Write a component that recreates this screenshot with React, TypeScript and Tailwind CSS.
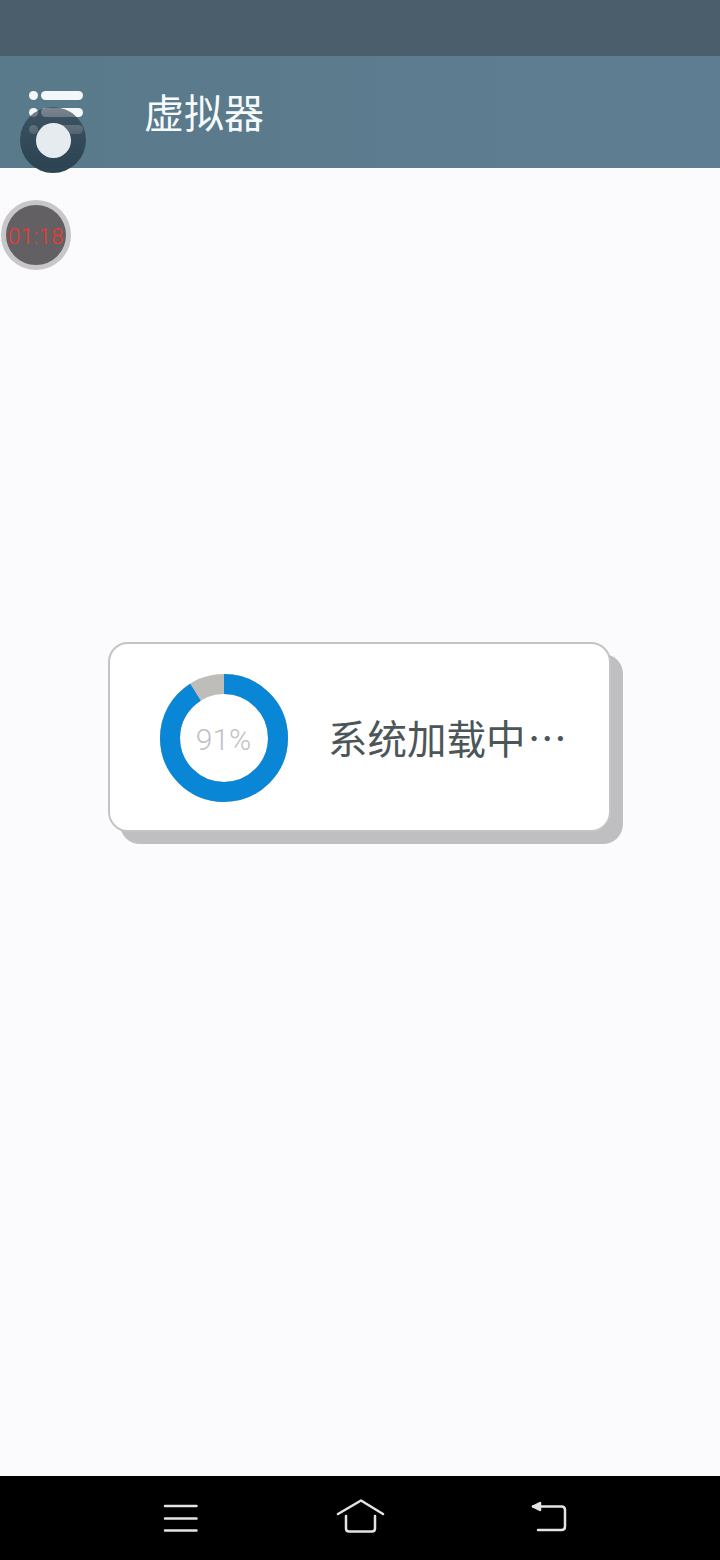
const cjk = "font-['Noto_Sans_CJK_SC','Noto_Sans',sans-serif]";

function Donut() {
  // 91% ring, the grey part is what's left
  const r = 54;
  const c = 2 * Math.PI * r;
  return (
    <svg width="128" height="128" viewBox="0 0 128 128" className="shrink-0">
      <circle cx="64" cy="64" r={r} fill="none" stroke="#bfbdb9" strokeWidth="20" />
      <circle
        cx="64"
        cy="64"
        r={r}
        fill="none"
        stroke="#0a86d6"
        strokeWidth="20"
        strokeDasharray={`${c * 0.91} ${c}`}
        transform="rotate(-90 64 64)"
      />
    </svg>
  );
}

export default function App() {
  return (
    <div className={`relative flex h-[1560px] w-[720px] flex-col overflow-hidden bg-[#fbfafc] ${cjk}`}>
      {/* status bar */}
      <div className="h-14 shrink-0 bg-[#4a5f6b]" />

      {/* header */}
      <div className="flex h-[112px] shrink-0 items-center bg-gradient-to-r from-[#597a8a] to-[#5f7d92] pl-[29px]">
        <div className="flex w-[54px] flex-col gap-[8px]">
          {[0, 1, 2].map((i) => (
            <div key={i} className="flex gap-[3px]">
              <div className="h-[9px] w-[9px] rounded-full bg-[#f4f8fa]" />
              <div className="h-[9px] flex-1 rounded-full bg-[#f4f8fa]" />
            </div>
          ))}
        </div>
        <div className="mb-[2px] ml-[61px] text-[40px] leading-none text-[#f6fafb]">虚拟器</div>
      </div>

      {/* loading card */}
      <div className="flex-1 pl-[108px] pt-[474px]">
        <div className="flex h-[190px] w-[503px] items-center rounded-[20px] border-[2.500px] border-[#c4c4c6] bg-white pl-[49.500px] shadow-[12px_12px_0_#bfbfc1]">
          <div className="relative mt-[2px] h-[128px] w-[128px] shrink-0">
            <Donut />
            <div className="absolute inset-0 flex items-center justify-center pt-[3px] font-['Roboto',sans-serif] text-[30px] font-light text-[#c0c2c4]">
              91%
            </div>
          </div>
          <div className="ml-[40.500px] whitespace-nowrap text-[39.500px] leading-none text-[#4c5658]">
            系统加载中
            <span className="ml-[2px]">…</span>
          </div>
        </div>
      </div>

      {/* nav bar */}
      <div className="flex h-[84px] shrink-0 items-center bg-black">
        <svg width="720" height="84" viewBox="0 0 720 84" fill="none" stroke="#e4e4e4" strokeWidth="2.5" strokeLinecap="round" strokeLinejoin="round">
          <path d="M165 30H196.500M165 42.500H196.500M165 54.500H196.500" />
          <path d="M338 38L361 24.500L383 38M346 40V52.500Q346 55.500 349 55.500H372Q375 55.500 375 52.500V40" />
          <path d="M533 30.500H561.500Q565 30.500 565 34V50.500Q565 54 561.500 54H538" />
          <path d="M533 30.500L540 27V34Z" fill="#e4e4e4" />
        </svg>
      </div>

      {/* floating assist ball, see-through towards the top */}
      <div className="absolute left-[20px] top-[107px] flex h-[66px] w-[66px] items-center justify-center rounded-full bg-gradient-to-b from-[#2c3a4c]/60 via-[#2c4250]/85 to-[#2c4250]">
        <div className="h-[35px] w-[35px] rounded-full bg-[#e6ebf0]" />
      </div>

      {/* floating timer */}
      <div className="absolute left-[1px] top-[200px] flex h-[70px] w-[70px] items-center justify-center rounded-full border-[5px] border-[#c8c6c8] bg-[#626062] pt-[2px] font-['Roboto',sans-serif] text-[22px] font-light tracking-[0.5px] text-[#f8352e]">
        01:18
      </div>
    </div>
  );
}
